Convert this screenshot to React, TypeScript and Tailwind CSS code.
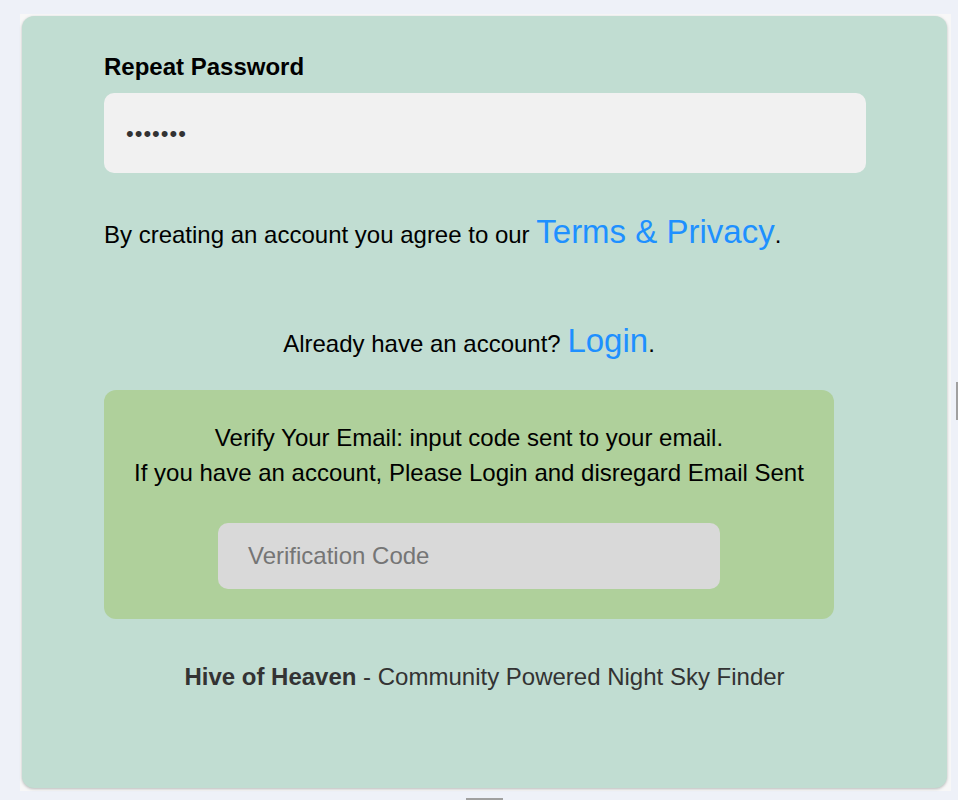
import React from "react";

export default function App() {
  return (
    <div
      className="relative w-[958px] h-[800px] overflow-hidden bg-[#eef1f8]"
      style={{ fontFamily: '"Liberation Sans", Arial, sans-serif' }}
    >
      <div className="absolute left-[956px] top-[382px] w-[2px] h-[38px] bg-[#a0a0a0]" />
      <div className="absolute left-[466px] top-[798px] w-[37px] h-[2px] bg-[#a0a0a0]" />
      <div className="ml-[20px] mt-[14px] w-[931px] h-[777px] bg-[#f7f7f7] p-[2px]">
        <div className="w-[925px] h-[772px] rounded-[12px] bg-[#c1ddd2] shadow-[0_1px_3px_rgba(0,0,0,0.25)] pl-[82px] pt-[38px]">
          <div className="w-[730px]">
            <div className="text-[24px] font-bold text-black leading-[26px]">Repeat Password</div>
            <div className="mt-[13px] w-[762px] h-[80px] rounded-[10px] bg-[#f1f1f1] flex items-center pl-[22px] text-[#333] text-[22px] tracking-[1px]">
              •••••••
            </div>
            <div className="mt-[41px] text-[24px] text-black leading-[36px] whitespace-nowrap">
              By creating an account you agree to our{" "}
              <span className="text-[33px] text-[#1e90ff]">Terms &amp; Privacy</span>.
            </div>
            <div className="mt-[70px] text-center text-[24px] text-black leading-[36px]">
              Already have an account? <span className="text-[33px] text-[#1e90ff]">Login</span>.
            </div>
            <div className="mt-[28px] h-[229px] rounded-[12px] bg-[#afd09b] flex flex-col items-center pt-[30px]">
              <div className="text-[24px] text-black leading-[35px] text-center whitespace-nowrap">
                Verify Your Email: input code sent to your email.
                <br />
                If you have an account, Please Login and disregard Email Sent
              </div>
              <div className="mt-[33px] w-[502px] h-[66px] rounded-[10px] bg-[#d9d9d9] flex items-center pl-[30px] text-[24px] text-[#757575]">
                Verification Code
              </div>
            </div>
          </div>
          <div className="mt-[44px] w-[761px] text-center text-[24px] leading-[28px] text-[#333]">
            <span className="font-bold">Hive of Heaven</span> - Community Powered Night Sky Finder
          </div>
        </div>
      </div>
    </div>
  );
}
